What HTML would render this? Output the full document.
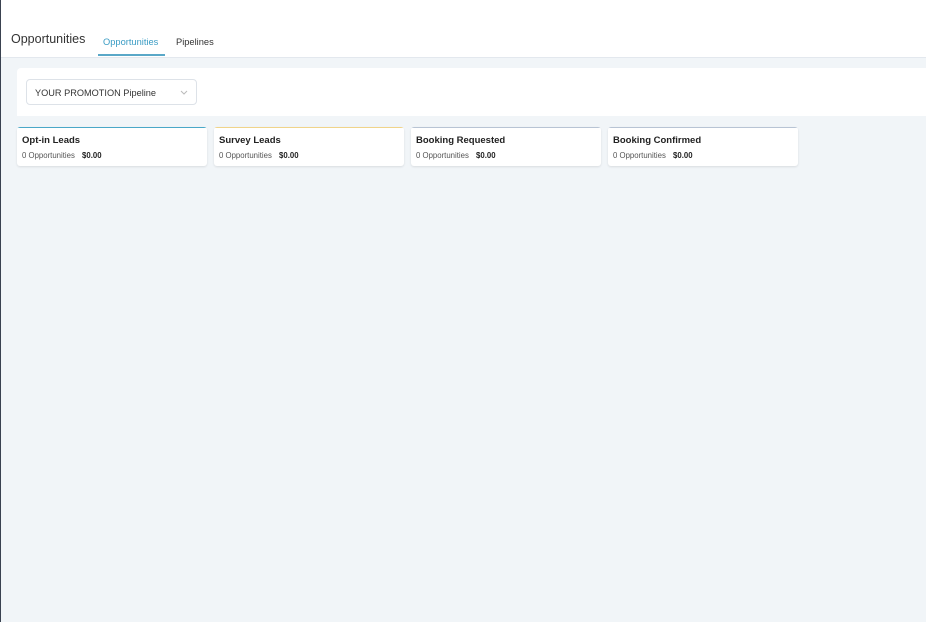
<!DOCTYPE html>
<html><head><meta charset="utf-8"><style>
*{box-sizing:border-box;margin:0;padding:0}
body{width:926px;height:622px;overflow:hidden;background:#f1f5f8;font-family:"Liberation Sans",sans-serif;position:relative}
.edge{position:absolute;left:0;top:0;width:1px;height:622px;background:#3a4250}
.hdr{position:absolute;left:1px;top:0;width:925px;height:58px;background:#fff;border-bottom:1px solid #e3e8ee}
.title{position:absolute;left:11px;top:32px;font-size:12.5px;color:#333}
.tab{position:absolute;top:37px;font-size:9.3px;color:#333}
.tab.a{left:103px;color:#3a9cc4}
.ul{position:absolute;left:98px;top:54px;width:67px;height:2px;background:#5aa8c8}
.band{position:absolute;left:17px;top:68px;width:909px;height:48px;background:#fff;border-radius:4px 0 0 0}
.sel{position:absolute;left:26px;top:79px;width:171px;height:26px;border:1px solid #dde2e8;border-radius:4px;background:#fff;font-size:9.2px;color:#333;padding:8px 0 0 8px}
.sel svg{position:absolute;right:8px;top:10px}
.card{position:absolute;top:127px;width:190px;height:39px;background:#fff;border-radius:3px;box-shadow:0 1px 2px rgba(0,0,0,.1);overflow:hidden}
.card s{position:absolute;left:0;top:0;width:100%;height:1px;background:#b8c4d4}
.card b{position:absolute;left:5px;top:8px;font-size:9.5px;color:#222}
.card i{position:absolute;left:5px;top:24px;font-style:normal;font-size:7.8px;color:#555}
.card i em{font-style:normal;font-weight:bold;color:#222;margin-left:5px}
</style></head><body>
<div class="edge"></div>
<div class="hdr"></div>
<div class="title">Opportunities</div>
<div class="tab a">Opportunities</div>
<div class="tab" style="left:176px">Pipelines</div>
<div class="ul"></div>
<div class="band"></div>
<div class="sel">YOUR PROMOTION Pipeline<svg width="8" height="5" viewBox="0 0 8 5"><path d="M1 1L4 4L7 1" fill="none" stroke="#bbb" stroke-width="1"/></svg></div>
<div class="card" style="left:17px"><s style="background:#4aa8c8"></s><b>Opt-in Leads</b><i>0 Opportunities <em>$0.00</em></i></div>
<div class="card" style="left:214px"><s style="background:#f0d48a"></s><b>Survey Leads</b><i>0 Opportunities <em>$0.00</em></i></div>
<div class="card" style="left:411px"><s></s><b>Booking Requested</b><i>0 Opportunities <em>$0.00</em></i></div>
<div class="card" style="left:608px"><s></s><b>Booking Confirmed</b><i>0 Opportunities <em>$0.00</em></i></div>
</body></html>
